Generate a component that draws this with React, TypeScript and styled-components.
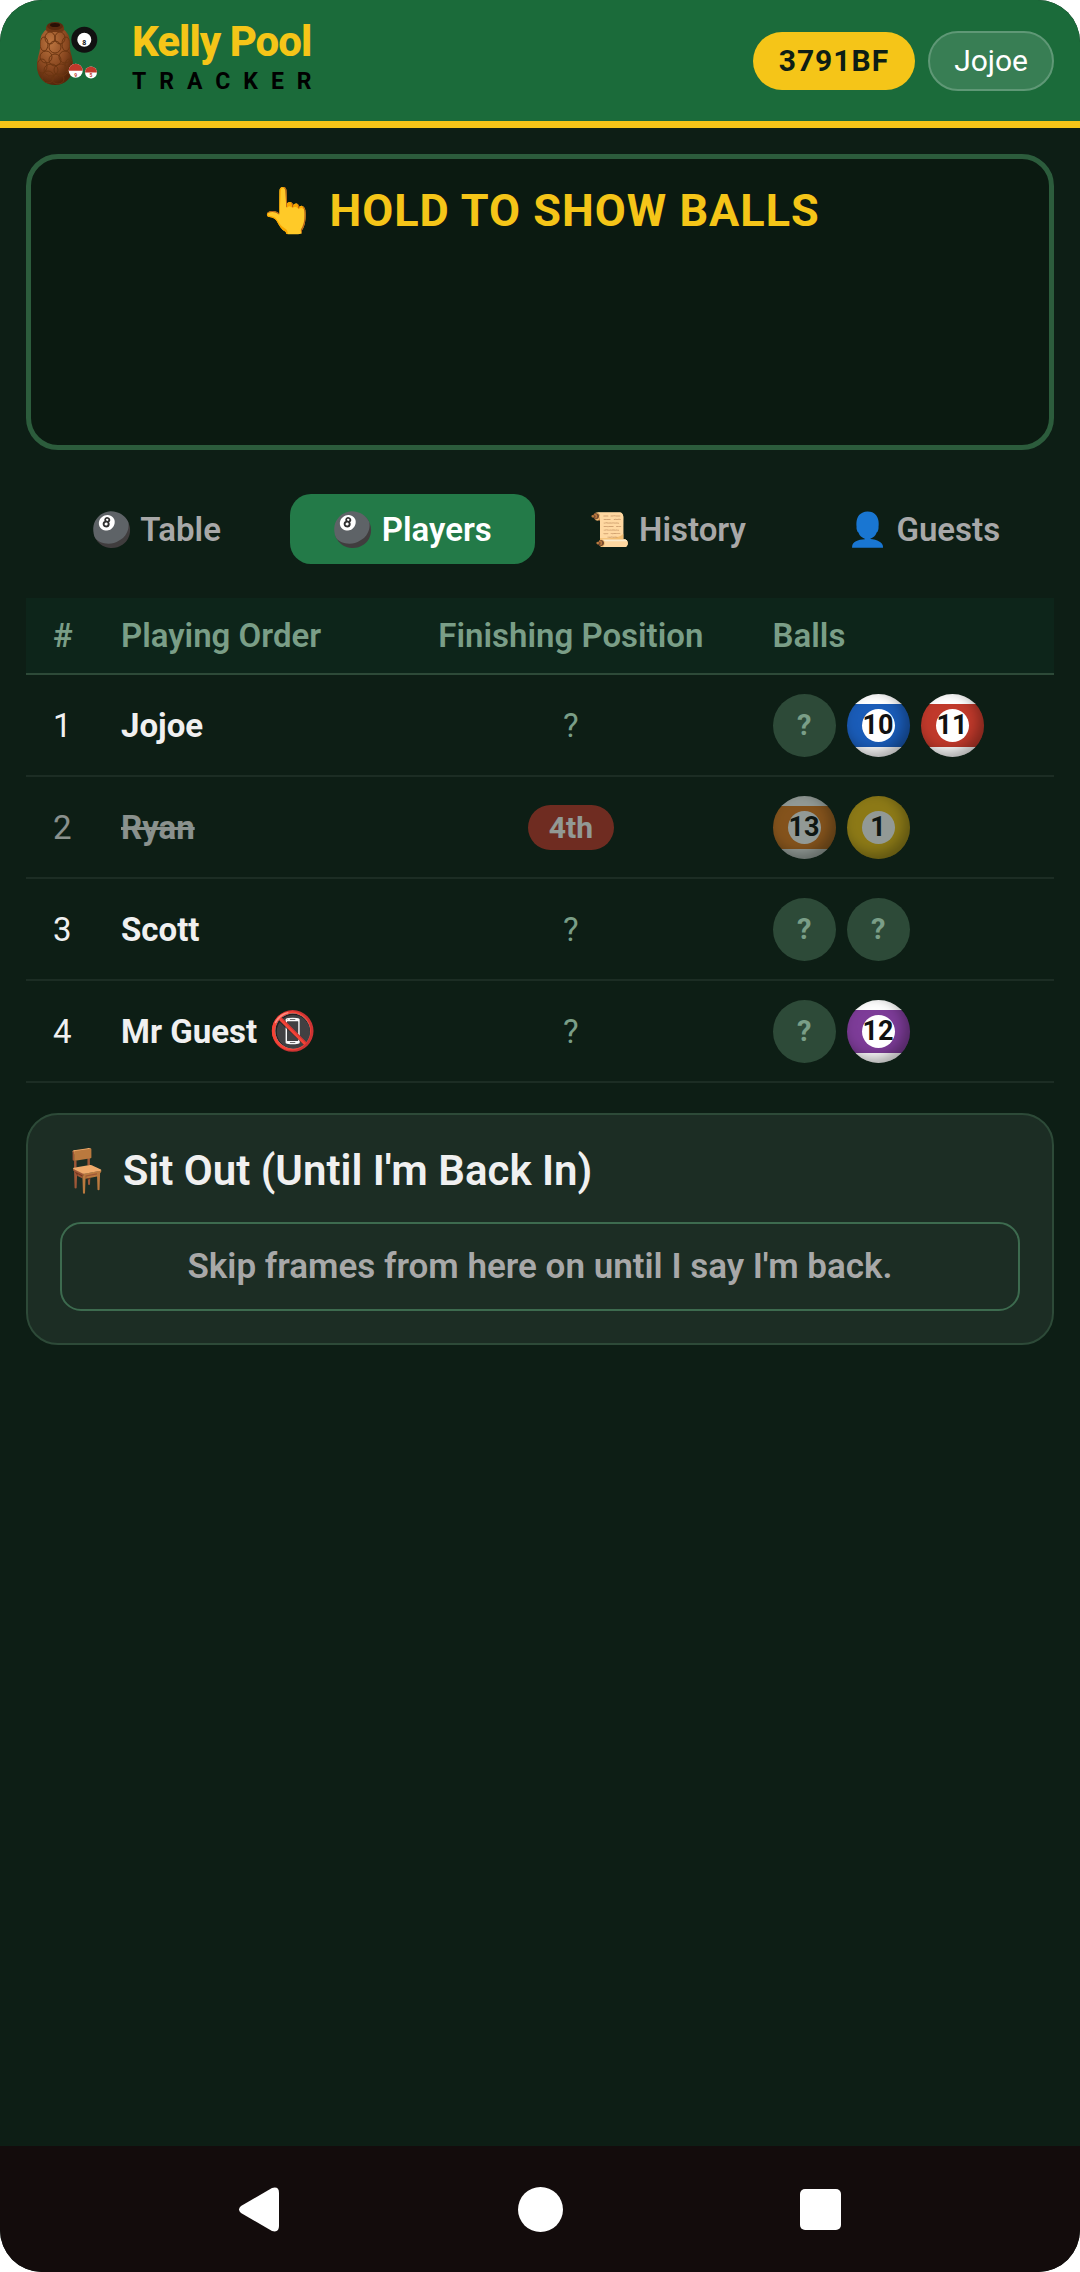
import React from "react";
import styled, {createGlobalStyle, css} from "styled-components";

interface IBall {
    color?: string;
    striped?: boolean;
    number?: number;
}

interface IPlayer {
    name: string;
    balls: IBall[];
    finished?: string;
    noPhone?: boolean;
}

const BLUE = "#1a5cb8";
const RED = "#c0392b";
const ORANGE = "#e67e22";
const YELLOW = "#f5c518";
const PURPLE = "#7d3c98";

const PLAYERS: IPlayer[] = [
    {
        name: "Jojoe",
        balls: [
            {},
            {number: 10, color: BLUE, striped: true},
            {number: 11, color: RED, striped: true},
        ],
    },
    {
        name: "Ryan",
        finished: "4th",
        balls: [
            {number: 13, color: ORANGE, striped: true},
            {number: 1, color: YELLOW},
        ],
    },
    {name: "Scott", balls: [{}, {}]},
    {
        name: "Mr Guest",
        noPhone: true,
        balls: [{}, {number: 12, color: PURPLE, striped: true}],
    },
];

const TABS = [
    {icon: "🎱", label: "Table"},
    {icon: "🎱", label: "Players"},
    {icon: "📜", label: "History"},
    {icon: "👤", label: "Guests"},
];

const GlobalStyle = createGlobalStyle`
    * {
        box-sizing: border-box;
    }

    body {
        background-color: #fff;
        font-family: Roboto, "Noto Color Emoji", sans-serif;
        margin: 0;
    }

    button {
        background: none;
        border: 0;
        cursor: pointer;
        font-family: inherit;
        padding: 0;
    }

    svg {
        display: block;
    }
`;

const Screen = styled.div`
    background-color: #0d1e15;
    border-radius: 42px;
    color: #f0f0f0;
    display: flex;
    flex-direction: column;
    min-height: 100vh;
    overflow: hidden;
`;

const Header = styled.header`
    background-color: #1b6b3a;
    border-bottom: 7px solid #f5c518;
    display: flex;
    height: 128px;
    padding: 0 26px 0 30px;
`;

const Brand = styled.div`
    display: flex;
    flex: 1;
    gap: 26px;
    padding-top: 14px;
`;

const BrandText = styled.div`
    display: flex;
    flex-direction: column;
    padding-top: 4px;
`;

const BrandName = styled.h1`
    color: #f5c518;
    font-size: 42px;
    font-weight: 800;
    letter-spacing: -1px;
    line-height: 48px;
    margin: 0;
`;

const BrandSub = styled.span`
    color: #000;
    font-size: 23px;
    font-weight: 700;
    letter-spacing: 13px;
    line-height: 32px;
`;

const Chips = styled.div`
    align-items: center;
    display: flex;
    gap: 13px;
`;

const RoomCode = styled.button`
    background-color: #f5c518;
    border-radius: 29px;
    color: #0d1e15;
    font-size: 30px;
    font-weight: 700;
    height: 58px;
    letter-spacing: 1px;
    padding: 0 26px;
`;

const UserChip = styled.button`
    background-color: #387e54;
    border: 2px solid #5f9876;
    border-radius: 30px;
    color: #fff;
    font-size: 30px;
    height: 60px;
    padding: 0 24px;
`;

const Main = styled.main`
    flex: 1;
    padding: 26px;
`;

const HoldPanel = styled.button`
    background-color: #0b1a11;
    border: 5px solid #2c5c3c;
    border-radius: 32px;
    color: #f5c518;
    display: flex;
    font-size: 45px;
    font-weight: 700;
    height: 296px;
    justify-content: center;
    letter-spacing: 1px;
    line-height: 56px;
    padding: 24px;
    width: 100%;
`;

const Tabs = styled.nav`
    display: grid;
    gap: 11px;
    grid-template-columns: repeat(4, 1fr);
    margin: 44px 8px 34px;
`;

const Tab = styled.button<{$active: boolean}>`
    border-radius: 21px;
    color: #a8a8a8;
    font-size: 33px;
    font-weight: 600;
    height: 70px;

    ${({$active}) =>
        $active &&
        css`
            background-color: #237a48;
            color: #fff;
        `}
`;

const Table = styled.table`
    border-collapse: collapse;
    font-size: 33px;
    table-layout: fixed;
    width: 100%;
`;

const HeadCell = styled.th<{$width: string; $center?: boolean}>`
    background-color: #0d251a;
    border-bottom: 2px solid #2d4a38;
    color: #7a9e87;
    font-weight: 600;
    height: 76px;
    padding: 0 0 0 ${({$center}) => ($center ? 0 : 27)}px;
    text-align: ${({$center}) => ($center ? "center" : "left")};
    width: ${({$width}) => $width};
`;

const Row = styled.tr`
    border-bottom: 2px solid #1c2d24;
`;

const Cell = styled.td<{$center?: boolean; $out?: boolean}>`
    height: 102px;
    padding: 0 0 0 ${({$center}) => ($center ? 0 : 27)}px;
    text-align: ${({$center}) => ($center ? "center" : "left")};

    > * {
        opacity: ${({$out}) => ($out ? 0.55 : 1)};
    }
`;

const Name = styled.span<{$struck: boolean}>`
    align-items: center;
    display: flex;
    font-weight: 700;
    gap: 12px;
    text-decoration: ${({$struck}) => ($struck ? "line-through" : "none")};
`;

const NoPhone = styled.span`
    font-size: 38px;
`;

const Unknown = styled.span`
    color: #7a9e87;
`;

const Badge = styled.span`
    background-color: #c0392b;
    border-radius: 23px;
    color: #fff;
    display: inline-block;
    font-size: 30px;
    font-weight: 700;
    line-height: 45px;
    padding: 0 21px;
    vertical-align: middle;
`;

const BallList = styled.div`
    display: flex;
    gap: 11px;
`;

const BallShape = styled.span<{$color?: string; $striped?: boolean}>`
    align-items: center;
    background: #2d4a38;
    border-radius: 50%;
    color: #7a9e87;
    display: flex;
    font-size: 29px;
    font-weight: 700;
    height: 63px;
    justify-content: center;
    width: 63px;

    ${({$color, $striped}) =>
        $color &&
        css`
            background: ${$striped
                ? `linear-gradient(#fff 10px, ${$color} 10px 53px, #fff 53px)`
                : $color};
            box-shadow: inset -5px -5px 13px rgba(0, 0, 0, 0.35);
        `}
`;

const BallNumber = styled.span`
    align-items: center;
    background-color: #fff;
    border-radius: 50%;
    color: #111;
    display: flex;
    font-size: 27px;
    height: 33px;
    justify-content: center;
    width: 33px;
`;

const Card = styled.section`
    background-color: #1c2d24;
    border: 2px solid #2d4a38;
    border-radius: 32px;
    margin-top: 30px;
    padding: 32px;
`;

const CardTitle = styled.h2`
    font-size: 42px;
    font-weight: 600;
    line-height: 48px;
    margin: 0 0 27px;
`;

const SkipButton = styled.button`
    border: 2px solid #3d6b4f;
    border-radius: 21px;
    color: #a8a8a8;
    font-size: 35px;
    font-weight: 600;
    height: 89px;
    width: 100%;
`;

const NavBar = styled.nav`
    align-items: center;
    background-color: #130c0c;
    display: flex;
    gap: 235px;
    height: 126px;
    justify-content: center;
`;

const NavButton = styled.button`
    height: 45px;
    width: 45px;
`;

// Net of the shell: [cx, cy, rx, ry] of each cell outline.
const CELLS = [
    [50, 38, 5, 6],
    [60, 38, 5, 6],
    [44, 44, 4, 7],
    [55, 47, 6, 6],
    [66, 44, 4, 7],
    [46, 57, 6, 6],
    [55, 60, 6, 6],
    [65, 57, 6, 6],
    [42, 66, 5, 7],
    [51, 70, 7, 6],
    [61, 70, 7, 6],
    [69, 66, 4, 7],
    [48, 77, 6, 6],
    [58, 79, 6, 5],
];

const Logo = () => (
    <svg width="76" height="80" viewBox="30 14 76 80" aria-hidden="true">
        <defs>
            <radialGradient id="shell" cx="0.38" cy="0.25" r="0.75">
                <stop offset="0" stopColor="#bd7640" />
                <stop offset="0.6" stopColor="#8a4820" />
                <stop offset="1" stopColor="#55260a" />
            </radialGradient>
            <clipPath id="nut">
                <path d="M47 29Q40 33 40 44C41 51 37 56 37 66C37 78 45 85 55 85S73 78 73 66C73 56 69 51 70 44Q70 33 63 29Z" />
            </clipPath>
        </defs>
        <g clipPath="url(#nut)">
            <rect x="37" y="28" width="36" height="57" fill="url(#shell)" />
            <g fill="none" stroke="#6b3612" strokeWidth="1">
                {CELLS.map(([cx, cy, rx, ry]) => (
                    <ellipse key={`${cx}-${cy}`} cx={cx} cy={cy} rx={rx} ry={ry} />
                ))}
            </g>
        </g>
        <rect x="46" y="25" width="18" height="7" rx="3" fill="#6f3714" />
        <ellipse cx="55" cy="26" rx="8" ry="4" fill="#5a2a0e" />
        <ellipse cx="55" cy="25" rx="5" ry="2" fill="#2a1005" />
        <circle cx="84.300" cy="39.700" r="13" fill="#111" />
        <circle cx="84.300" cy="39.700" r="7" fill="#fff" />
        <circle cx="75.700" cy="70.700" r="7" fill="#fff" />
        <path d="M68.700 70.700a7 7 0 0 1 14 0Z" fill={RED} />
        <circle cx="91" cy="72.500" r="6" fill="#fff" />
        <path d="M85 72.500a6 6 0 0 1 12 0Z" fill={RED} />
        <g fontWeight="700" textAnchor="middle">
            <text x="84.300" y="45" fontSize="7" fill="#111">
                8
            </text>
            <text x="75.700" y="77" fontSize="5" fill={RED}>
                9
            </text>
            <text x="91" y="77" fontSize="5" fill={RED}>
                5
            </text>
        </g>
    </svg>
);

const Ball = ({color, striped, number}: IBall) => (
    <BallShape $color={color} $striped={striped}>
        {number ? <BallNumber>{number}</BallNumber> : "?"}
    </BallShape>
);

const App = () => {
    const [tab, setTab] = React.useState("Players");

    return (
        <Screen>
            <GlobalStyle />
            <Header>
                <Brand>
                    <Logo />
                    <BrandText>
                        <BrandName>Kelly Pool</BrandName>
                        <BrandSub>TRACKER</BrandSub>
                    </BrandText>
                </Brand>
                <Chips>
                    <RoomCode>3791BF</RoomCode>
                    <UserChip>Jojoe</UserChip>
                </Chips>
            </Header>
            <Main>
                <HoldPanel>👆 HOLD TO SHOW BALLS</HoldPanel>
                <Tabs>
                    {TABS.map(({icon, label}) => (
                        <Tab
                            key={label}
                            $active={label === tab}
                            onClick={() => setTab(label)}
                        >
                            {icon} {label}
                        </Tab>
                    ))}
                </Tabs>
                <Table>
                    <thead>
                        <tr>
                            <HeadCell $width="68px">#</HeadCell>
                            <HeadCell $width="auto">Playing Order</HeadCell>
                            <HeadCell $width="34%" $center>
                                Finishing Position
                            </HeadCell>
                            <HeadCell $width="30%">Balls</HeadCell>
                        </tr>
                    </thead>
                    <tbody>
                        {PLAYERS.map((player, i) => (
                            <Row key={player.name}>
                                <Cell $out={!!player.finished}>
                                    <span>{i + 1}</span>
                                </Cell>
                                <Cell $out={!!player.finished}>
                                    <Name $struck={!!player.finished}>
                                        {player.name}
                                        {player.noPhone && <NoPhone>📵</NoPhone>}
                                    </Name>
                                </Cell>
                                <Cell $center $out={!!player.finished}>
                                    {player.finished ? (
                                        <Badge>{player.finished}</Badge>
                                    ) : (
                                        <Unknown>?</Unknown>
                                    )}
                                </Cell>
                                <Cell $out={!!player.finished}>
                                    <BallList>
                                        {player.balls.map((ball, j) => (
                                            <Ball key={j} {...ball} />
                                        ))}
                                    </BallList>
                                </Cell>
                            </Row>
                        ))}
                    </tbody>
                </Table>
                <Card>
                    <CardTitle>🪑 Sit Out (Until I'm Back In)</CardTitle>
                    <SkipButton>
                        Skip frames from here on until I say I'm back.
                    </SkipButton>
                </Card>
            </Main>
            <NavBar>
                <NavButton aria-label="Back">
                    <svg width="45" height="45" viewBox="0 0 45 45">
                        <path
                            d="M3 19L34 1Q41 -1 41 6V39Q41 46 34 44L3 26Q-1 22.500 3 19Z"
                            fill="#fff"
                        />
                    </svg>
                </NavButton>
                <NavButton aria-label="Home">
                    <svg width="45" height="45" viewBox="0 0 45 45">
                        <circle cx="22.500" cy="22.500" r="22.500" fill="#fff" />
                    </svg>
                </NavButton>
                <NavButton aria-label="Recent apps">
                    <svg width="45" height="45" viewBox="0 0 45 45">
                        <rect x="2" y="2" width="41" height="41" rx="5" fill="#fff" />
                    </svg>
                </NavButton>
            </NavBar>
        </Screen>
    );
};

export default App;
